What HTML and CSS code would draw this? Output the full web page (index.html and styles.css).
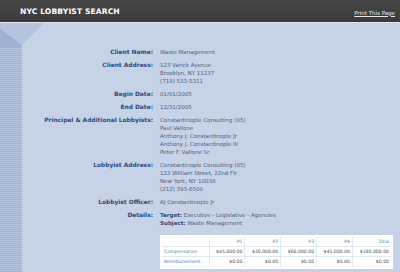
FILE: index.html
```html
<!DOCTYPE html>
<html>
  <head>
    <meta charset="UTF-8" />
    <title>NYC Lobbyist Search</title>
    <link rel="stylesheet" href="styles.css">
  </head>
  <body>
    <header class="top-bar">
      <h1 class="site-title">NYC LOBBYIST SEARCH</h1>
      <a class="print-link" href="#">Print This Page</a>
    </header>

    <div class="page">
      <aside class="side-strip">
        <svg class="side-chevron" width="44" height="24" viewBox="0 0 44 24">
          <polygon points="0,0 44,0 22,22 22,24 0,24" fill="#b4c4de" />
          <polygon points="0,5 22,22 22,24 0,24" fill="#9fb2d3" />
        </svg>
        <div class="side-stripes"></div>
      </aside>

      <main class="record">
        <div class="field">
          <div class="field-label">Client Name:</div>
          <div class="field-value">Waste Management</div>
        </div>
        <div class="field">
          <div class="field-label">Client Address:</div>
          <div class="field-value">123 Varick Avenue<br>Brooklyn, NY 11237<br>(718) 533-5311</div>
        </div>
        <div class="field">
          <div class="field-label">Begin Date:</div>
          <div class="field-value">01/01/2005</div>
        </div>
        <div class="field">
          <div class="field-label">End Date:</div>
          <div class="field-value">12/31/2005</div>
        </div>
        <div class="field">
          <div class="field-label">Principal &amp; Additional Lobbyists:</div>
          <div class="field-value">Constantinople Consulting (05)<br>Paul Vallone<br>Anthony J. Constantinople Jr<br>Anthony J. Constantinople III<br>Peter F. Vallone Sr</div>
        </div>
        <div class="field">
          <div class="field-label">Lobbyist Address:</div>
          <div class="field-value">Constantinople Consulting (05)<br>123 William Street, 22nd Flr<br>New York, NY 10038<br>(212) 393-6500</div>
        </div>
        <div class="field">
          <div class="field-label">Lobbyist Officer:</div>
          <div class="field-value">AJ Constantinople Jr</div>
        </div>
        <div class="field">
          <div class="field-label">Details:</div>
          <div class="field-value"><b>Target:</b> Executive - Legislative - Agencies<br><b>Subject:</b> Waste Management</div>
        </div>

        <table class="pay-table">
          <tr>
            <th></th>
            <th>P1</th>
            <th>P2</th>
            <th>P3</th>
            <th>P4</th>
            <th>Total</th>
          </tr>
          <tr>
            <td class="row-name">Compensation</td>
            <td>$45,000.00</td>
            <td>$30,000.00</td>
            <td>$60,000.00</td>
            <td>$45,000.00</td>
            <td>$180,000.00</td>
          </tr>
          <tr>
            <td class="row-name">Reimbursement</td>
            <td>$0.00</td>
            <td>$0.00</td>
            <td>$0.00</td>
            <td>$0.00</td>
            <td>$0.00</td>
          </tr>
        </table>
      </main>
    </div>
  </body>
</html>
```

FILE: styles.css
```css
:root {
  --bar-dark: #3e3e3e;
  --page-blue: #c6d2e5;
  --strip-blue: #a8b9d6;
  --label-navy: #2f4a7c;
  --value-blue: #4d5e84;
  --table-teal: #3f82b4;
}

* {
  margin: 0;
  padding: 0;
  box-sizing: border-box;
}

body {
  font-family: 'DejaVu Sans', Verdana, sans-serif;
  background: var(--page-blue);
  width: 400px;
  height: 272px;
  overflow: hidden;
}

.top-bar {
  height: 23px;
  background: linear-gradient(180deg, #474747 0%, #3a3a3a 100%);
  border-bottom: 1px solid #e4e6ea;
  display: flex;
  align-items: center;
  justify-content: space-between;
  padding: 0 5px 0 20px;
}

.site-title {
  color: #fff;
  font-size: 7.6px;
  font-weight: bold;
  letter-spacing: 0.1px;
}

.print-link {
  color: #e8e8e8;
  font-size: 5.5px;
  text-decoration: underline;
  margin-top: 3px;
}

.page {
  display: flex;
  height: 249px;
}

.side-strip {
  width: 22px;
  flex: none;
  display: flex;
  flex-direction: column;
}

.side-chevron {
  display: block;
  overflow: visible;
  flex: none;
}

.side-stripes {
  flex: 1;
  background: repeating-linear-gradient(180deg, #a4b6d4 0px, #a4b6d4 1px, #b3c3dd 1px, #b3c3dd 2px);
}

.record {
  flex: 1;
  padding-top: 25px;
  display: flex;
  flex-direction: column;
  gap: 5px;
}

.field {
  display: grid;
  grid-template-columns: 131px 1fr;
  column-gap: 7px;
  line-height: 8px;
}

.field-label {
  text-align: right;
  color: var(--label-navy);
  font-weight: bold;
  font-size: 5.9px;
}

.field-value {
  color: var(--value-blue);
  font-size: 5.5px;
}

.field-value b {
  color: var(--label-navy);
}

.pay-table {
  margin: 3px 0 0 138px;
  width: 233px;
  background: #fff;
  border: 2px solid #fff;
  border-collapse: separate;
  border-spacing: 0;
  font-size: 4.6px;
}

.pay-table th,
.pay-table td {
  border-right: 1px solid #e3e8ef;
  border-bottom: 1px solid #e3e8ef;
  text-align: right;
  padding: 0 2px;
  height: 10px;
  line-height: 8px;
  color: #555;
  white-space: nowrap;
}

.pay-table th {
  color: var(--table-teal);
  font-weight: normal;
}

.pay-table td.row-name {
  text-align: left;
  color: var(--table-teal);
}

.pay-table tr > :last-child {
  border-right: none;
}

.pay-table tr:last-child > * {
  border-bottom: none;
}
```
